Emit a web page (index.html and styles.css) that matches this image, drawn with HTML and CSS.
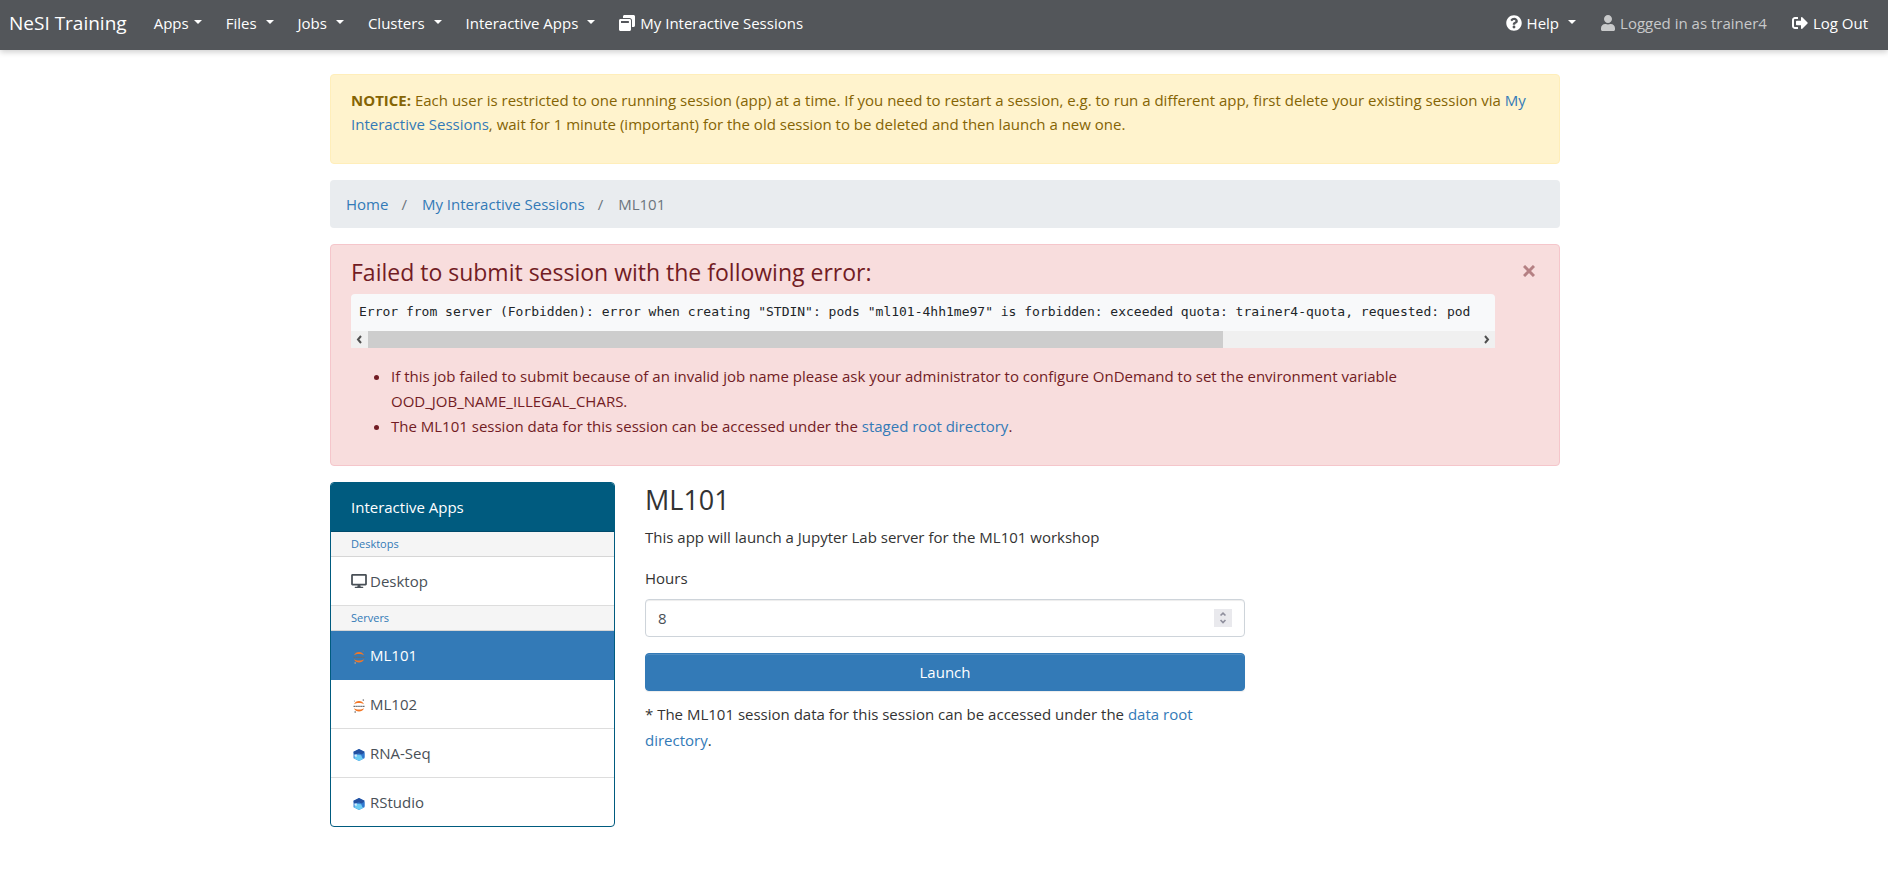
FILE: index.html
```html
<!DOCTYPE html>
<html lang="en">
<head>
<meta charset="utf-8">
<title>ML101 - NeSI Training</title>
<link rel="stylesheet" href="styles.css">
</head>
<body>
<svg class="sprite" aria-hidden="true">
  <symbol id="jupyter" viewBox="0 0 12 14">
    <path d="M1 5.300C2.500.8 9.500.8 11 5.300 8.500 3.500 3.500 3.500 1 5.300zM1 9.300c1.500 4.400 8.500 4.400 10 0-2.500 1.700-7.500 1.700-10 0z" fill="#f37726"/>
    <path d="M.5 7.400h11" stroke="#6b6b6d" stroke-width="1.300" stroke-dasharray="1.500 .4"/>
    <circle cx="10.300" cy="1.100" r=".8" fill="#777"/><circle cx="1.400" cy="2" r=".5" fill="#777"/><circle cx="2.200" cy="13" r=".9" fill="#999"/>
  </symbol>
  <symbol id="hexagon" viewBox="0 0 12 12">
    <path d="M6 0l5.500 2.800v6.400L6 12 .5 9.200V2.800z" fill="#3f86d6"/>
    <path d="M6 0l5.500 2.800L10 6 6 4.500 1 5.500.5 2.800z" fill="#2350a0"/>
    <path d="M6 12L1 9.300l3-3.500 4 .4 2 3.800z" fill="#6ccdf4"/>
    <path d="M1.500 5.500l2.500 0-.5 2.500-2-.5z" fill="#d8f0fc"/>
    <path d="M9 5l2.500-1v4.500L9.500 9z" fill="#2f78cf"/>
  </symbol>
</svg>
<nav class="navbar">
  <a class="brand" href="#">NeSI Training</a>
  <div class="nav-group">
    <a class="nav-link tight" href="#">Apps<span class="caret"></span></a>
    <a class="nav-link" href="#">Files<span class="caret"></span></a>
    <a class="nav-link" href="#">Jobs<span class="caret"></span></a>
    <a class="nav-link" href="#">Clusters<span class="caret"></span></a>
    <a class="nav-link" href="#">Interactive Apps<span class="caret"></span></a>
    <a class="nav-link" href="#"><svg class="icon" viewBox="0 0 512 512"><path d="M512 48v288c0 26.500-21.500 48-48 48h-48V176c0-44.100-35.900-80-80-80H128V48c0-26.500 21.500-48 48-48h288c26.500 0 48 21.500 48 48zM384 176v288c0 26.500-21.500 48-48 48H48c-26.500 0-48-21.500-48-48V176c0-26.500 21.500-48 48-48h288c26.500 0 48 21.500 48 48zm-68 28c0-6.600-5.400-12-12-12H76c-6.600 0-12 5.400-12 12v52h252v-52z"/></svg>My Interactive Sessions</a>
  </div>
  <div class="nav-group nav-end">
    <a class="nav-link" href="#"><svg class="icon" viewBox="0 0 512 512"><path d="M504 256c0 136.997-111.043 248-248 248S8 392.997 8 256C8 119.083 119.043 8 256 8s248 111.083 248 248zM262.655 90c-54.497 0-89.255 22.957-116.549 63.758-3.536 5.286-2.353 12.415 2.715 16.258l34.699 26.310c5.205 3.947 12.621 3.008 16.665-2.122 17.864-22.658 30.113-35.797 57.303-35.797 20.429 0 45.698 13.148 45.698 32.958 0 14.976-12.363 22.667-32.534 33.976C247.128 238.528 216 254.941 216 296v4c0 6.627 5.373 12 12 12h56c6.627 0 12-5.373 12-12v-1.333c0-28.462 83.186-29.647 83.186-106.667 0-58.002-60.165-102-116.531-102zM256 338c-25.365 0-46 20.635-46 46 0 25.364 20.635 46 46 46s46-20.636 46-46c0-25.365-20.635-46-46-46z"/></svg>Help<span class="caret"></span></a>
    <span class="nav-link muted"><svg class="icon icon-user" viewBox="0 0 448 512"><path d="M224 256c70.700 0 128-57.300 128-128S294.700 0 224 0 96 57.300 96 128s57.300 128 128 128zm89.600 32h-16.700c-22.200 10.200-46.900 16-72.900 16s-50.600-5.800-72.900-16h-16.700C60.200 288 0 348.200 0 422.400V464c0 26.500 21.500 48 48 48h352c26.500 0 48-21.500 48-48v-41.600c0-74.200-60.200-134.400-134.400-134.400z"/></svg>Logged in as trainer4</span>
    <a class="nav-link" href="#"><svg class="icon" viewBox="0 0 512 512"><path d="M497 273L329 441c-15 15-41 4.500-41-17v-96H152c-13.300 0-24-10.700-24-24v-96c0-13.300 10.700-24 24-24h136V88c0-21.400 25.900-32 41-17l168 168c9.300 9.400 9.300 24.600 0 34zM192 436v-40c0-6.600-5.400-12-12-12H96c-17.700 0-32-14.300-32-32V160c0-17.700 14.300-32 32-32h84c6.600 0 12-5.400 12-12V76c0-6.600-5.400-12-12-12H96c-53 0-96 43-96 96v192c0 53 43 96 96 96h84c6.600 0 12-5.400 12-12z"/></svg>Log Out</a>
  </div>
</nav>
<main class="container">
  <div class="alert notice"><strong>NOTICE:</strong> Each user is restricted to one running session (app) at a time. If you need to restart a session, e.g. to run a different app, first delete your existing session via <a href="#">My Interactive Sessions</a>, wait for 1 minute (important) for the old session to be deleted and then launch a new one.</div>
  <ol class="breadcrumb">
    <li><a href="#">Home</a></li>
    <li><a href="#">My Interactive Sessions</a></li>
    <li>ML101</li>
  </ol>
  <div class="alert danger" role="alert">
    <div class="danger-body">
      <h4 class="danger-title">Failed to submit session with the following error:</h4>
      <div class="error-box">
        <pre class="error-text">Error from server (Forbidden): error when creating "STDIN": pods "ml101-4hh1me97" is forbidden: exceeded quota: trainer4-quota, requested: pod</pre>
        <div class="scrollbar">
          <svg class="arrow" viewBox="0 0 17 17"><path d="M10 5L7 8.500l3 3.500"/></svg>
          <div class="track"><div class="thumb"></div></div>
          <svg class="arrow" viewBox="0 0 17 17"><path d="M7 5l3 3.500L7 12"/></svg>
        </div>
      </div>
      <ul class="hints">
        <li>If this job failed to submit because of an invalid job name please ask your administrator to configure OnDemand to set the environment variable OOD_JOB_NAME_ILLEGAL_CHARS.</li>
        <li>The ML101 session data for this session can be accessed under the <a href="#">staged root directory</a>.</li>
      </ul>
    </div>
    <button class="close" type="button" aria-label="Close"><svg viewBox="0 0 12 12"><path d="M1 1l10 10M11 1L1 11"/></svg></button>
  </div>
  <div class="columns">
    <aside class="menu">
      <div class="menu-head">Interactive Apps</div>
      <p class="menu-group">Desktops</p>
      <a class="menu-item" href="#"><svg class="app-icon dark" viewBox="0 0 576 512"><path d="M528 0H48C21.500 0 0 21.500 0 48v320c0 26.500 21.500 48 48 48h192l-16 48h-72c-13.300 0-24 10.700-24 24s10.700 24 24 24h272c13.300 0 24-10.700 24-24s-10.700-24-24-24h-72l-16-48h192c26.500 0 48-21.500 48-48V48c0-26.500-21.500-48-48-48zm-16 352H64V64h448v288z"/></svg>Desktop</a>
      <p class="menu-group">Servers</p>
      <a class="menu-item active" href="#"><svg class="app-icon small"><use href="#jupyter"/></svg>ML101</a>
      <a class="menu-item" href="#"><svg class="app-icon small"><use href="#jupyter"/></svg>ML102</a>
      <a class="menu-item" href="#"><svg class="app-icon small"><use href="#hexagon"/></svg>RNA-Seq</a>
      <a class="menu-item" href="#"><svg class="app-icon small"><use href="#hexagon"/></svg>RStudio</a>
    </aside>
    <section class="launch">
      <h3 class="title">ML101</h3>
      <p class="lead">This app will launch a Jupyter Lab server for the ML101 workshop</p>
      <form>
        <label class="label" for="hours">Hours</label>
        <div class="field">
          <input class="input" id="hours" type="number" value="8">
          <svg class="spinner" viewBox="0 0 18 22"><path d="M6 8l3-3 3 3M6 13.500l3 3 3-3"/></svg>
        </div>
        <button class="submit" type="button">Launch</button>
      </form>
      <p class="footnote">* The ML101 session data for this session can be accessed under the <a href="#">data root directory</a>.</p>
    </section>
  </div>
</main>
</body>
</html>
```
FILE: styles.css
```css
* { box-sizing: border-box; }
body {
  margin: 0;
  background: #fff;
  color: #333;
  font: 15px/24px "Open Sans", "Noto Sans", sans-serif;
}
a { color: #337ab7; text-decoration: none; }
h3, h4, p, ol, ul, pre { margin: 0; padding: 0; font-weight: 400; }
.sprite { position: absolute; width: 0; height: 0; }

.navbar {
  display: flex;
  align-items: center;
  height: 50px;
  padding: 0 20px 4px 9px;
  background: #53565a;
  box-shadow: 0 2px 6px rgba(0, 0, 0, .2);
  white-space: nowrap;
}
.brand { margin-right: 27px; color: #fff; font-size: 19px; }
.nav-group { display: flex; gap: 24px; }
.nav-end { gap: 25px; margin-left: auto; }
.nav-link { display: flex; align-items: center; color: #fff; }
.nav-link.muted { color: #c8c9ca; }
.icon { width: 16px; height: 16px; margin-right: 5px; fill: currentColor; }
.icon-user { width: 14px; }
.caret {
  margin: 0 0 2px 9px;
  border: 4px solid transparent;
  border-top-color: currentColor;
  border-bottom: 0;
}
.tight .caret { margin-left: 5px; }

.container { max-width: 1260px; margin: 24px auto 0; padding: 0 14px 0 16px; }
.alert { margin-bottom: 16px; border: 1px solid; border-radius: 4px; }
.notice {
  padding: 13px 20px 27px;
  border-color: #ffeeba;
  background: #fff3cd;
  color: #856404;
}
.breadcrumb {
  display: flex;
  margin-bottom: 16px;
  padding: 12px 16px;
  border-radius: 4px;
  background: #e9ecef;
  color: #6c757d;
  list-style: none;
}
.breadcrumb li + li::before { content: "/"; padding: 0 15px 0 13px; }

.danger {
  display: flex;
  justify-content: space-between;
  padding: 13px 20px 26px;
  border-color: #f5c6cb;
  background: #f8dddd;
  color: #721c24;
}
.danger-body { flex: 1; min-width: 0; margin-right: 24px; }
.danger-title { margin-bottom: 7px; font-size: 23px; line-height: 29px; }
.error-box { overflow: hidden; border-radius: 4px 4px 0 0; background: #f8f9fa; }
.error-text {
  overflow: hidden;
  padding: 8px 8px 9px;
  color: #212529;
  font: 13px/20px "DejaVu Sans Mono", "Liberation Mono", monospace;
}
.scrollbar { display: flex; height: 17px; background: #f0f0f0; }
.arrow { width: 17px; height: 17px; fill: none; stroke: #505050; stroke-width: 2; }
.track { flex: 1; }
.thumb { width: 77%; height: 100%; background: #cdcdcd; }
.hints { margin-top: 16px; padding-left: 40px; line-height: 25px; }
.close {
  width: 20px;
  height: 28px;
  padding: 0;
  border: 0;
  background: none;
}
.close svg { width: 12px; height: 12px; fill: none; stroke: #b58083; stroke-width: 3; }

.columns { display: flex; align-items: flex-start; gap: 30px; }
.menu {
  flex: 0 0 285px;
  overflow: hidden;
  border: 1px solid #005b7f;
  border-radius: 4px;
}
.menu-head { padding: 12px 20px; border-bottom: 1px solid #004a6b; background: #005b7f; color: #fff; }
.menu-group {
  height: 25px;
  padding: 0 20px;
  border-bottom: 1px solid #d6d6d6;
  background: #f5f5f5;
  color: #337ab7;
  font-size: 11px;
}
.menu-item {
  display: flex;
  align-items: center;
  height: 49px;
  padding: 0 20px;
  border-bottom: 1px solid #ddd;
  color: #495057;
}
.menu-item:last-child { height: 48px; border-bottom: 0; }
.menu-item.active { border-color: #337ab7; background: #337ab7; color: #fff; }
.app-icon { width: 16px; height: 14px; margin-right: 3px; fill: currentColor; }
.app-icon.small { width: 12px; margin: 3px 5px 0 2px; }

.launch { flex: 0 1 600px; }
.title { margin-bottom: 8px; font-size: 27px; line-height: 35px; }
.lead { margin-bottom: 17px; }
.label { display: block; margin-bottom: 9px; }
.field { position: relative; margin-bottom: 16px; }
.input {
  display: block;
  width: 100%;
  height: 38px;
  padding: 0 12px;
  border: 1px solid #ced4da;
  border-radius: 4px;
  background: #fff;
  box-shadow: inset 0 1px 1px rgba(0, 0, 0, .075);
  color: #495057;
  font: inherit;
  appearance: textfield;
}
.input::-webkit-inner-spin-button { appearance: none; }
.spinner {
  position: absolute;
  top: 10px;
  right: 13px;
  width: 18px;
  height: 18px;
  background: #e9e9ed;
  fill: none;
  stroke: #8f8f9d;
  stroke-width: 2;
}
.submit {
  display: block;
  width: 100%;
  height: 38px;
  border: 1px solid #337ab7;
  border-radius: 4px;
  background: #337ab7;
  box-shadow: inset 0 1px 0 rgba(255, 255, 255, .15), 0 1px 1px rgba(0, 0, 0, .075);
  color: #fff;
  font: inherit;
}
.footnote { margin-top: 10px; line-height: 26px; }
```
